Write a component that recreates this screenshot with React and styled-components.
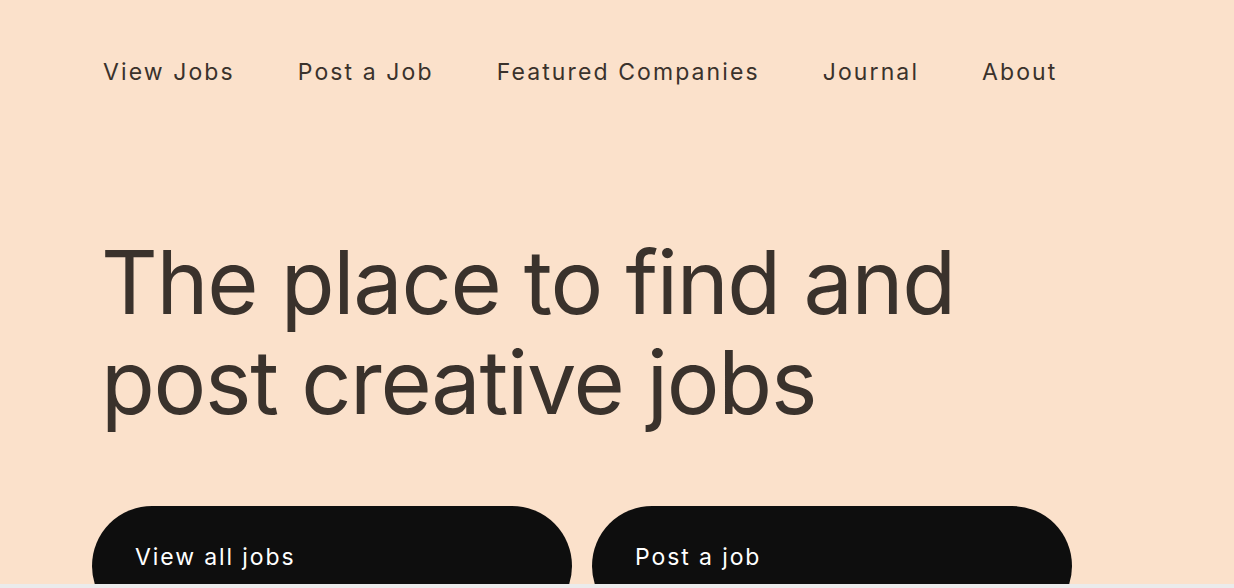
import React from 'react';
import styled, { createGlobalStyle } from 'styled-components';

const GlobalStyle = createGlobalStyle`
  html, body {
    margin: 0;
    padding: 0;
    background: #ebebeb;
  }
  * {
    box-sizing: border-box;
  }
`

const Page = styled.div`
  height: 584px;
  overflow: hidden;
  background-color: #fbe1cb;
  color: #3a322c;
  font-family: "Inter", "Liberation Sans", sans-serif;
  padding: 0 0 0 92px;
`

const Nav = styled.nav`
  display: flex;
  gap: 63px;
  padding: 58px 0 0 11px;
`

const NavLink = styled.a`
  font-size: 23px;
  letter-spacing: 2.1px;
  line-height: 28px;
  color: #3a322c;
  text-decoration: none;
  cursor: pointer;
`

const Headline = styled.h1`
  margin: 146px 0 0 9px;
  font-size: 88px;
  font-weight: 400;
  line-height: 100px;
  letter-spacing: -1.3px;
`

const Actions = styled.div`
  display: flex;
  gap: 20px;
  margin-top: 74px;
`

const Button = styled.a`
  display: flex;
  align-items: flex-start;
  width: 480px;
  height: 120px;
  padding: 37px 0 0 43px;
  border-radius: 60px;
  background-color: #0e0e0e;
  color: #ffffff;
  font-size: 23px;
  letter-spacing: 1.9px;
  text-decoration: none;
  cursor: pointer;
`

const links = ['View Jobs', 'Post a Job', 'Featured Companies', 'Journal', 'About']

export default function App() {
  return (
    <>
      <GlobalStyle />
      <Page>
        <Nav>
          {links.map((l) => (
            <NavLink key={l}>{l}</NavLink>
          ))}
        </Nav>
        <Headline>
          The place to find and
          <br />
          post creative jobs
        </Headline>
        <Actions>
          <Button>View all jobs</Button>
          <Button>Post a job</Button>
        </Actions>
      </Page>
    </>
  )
}
